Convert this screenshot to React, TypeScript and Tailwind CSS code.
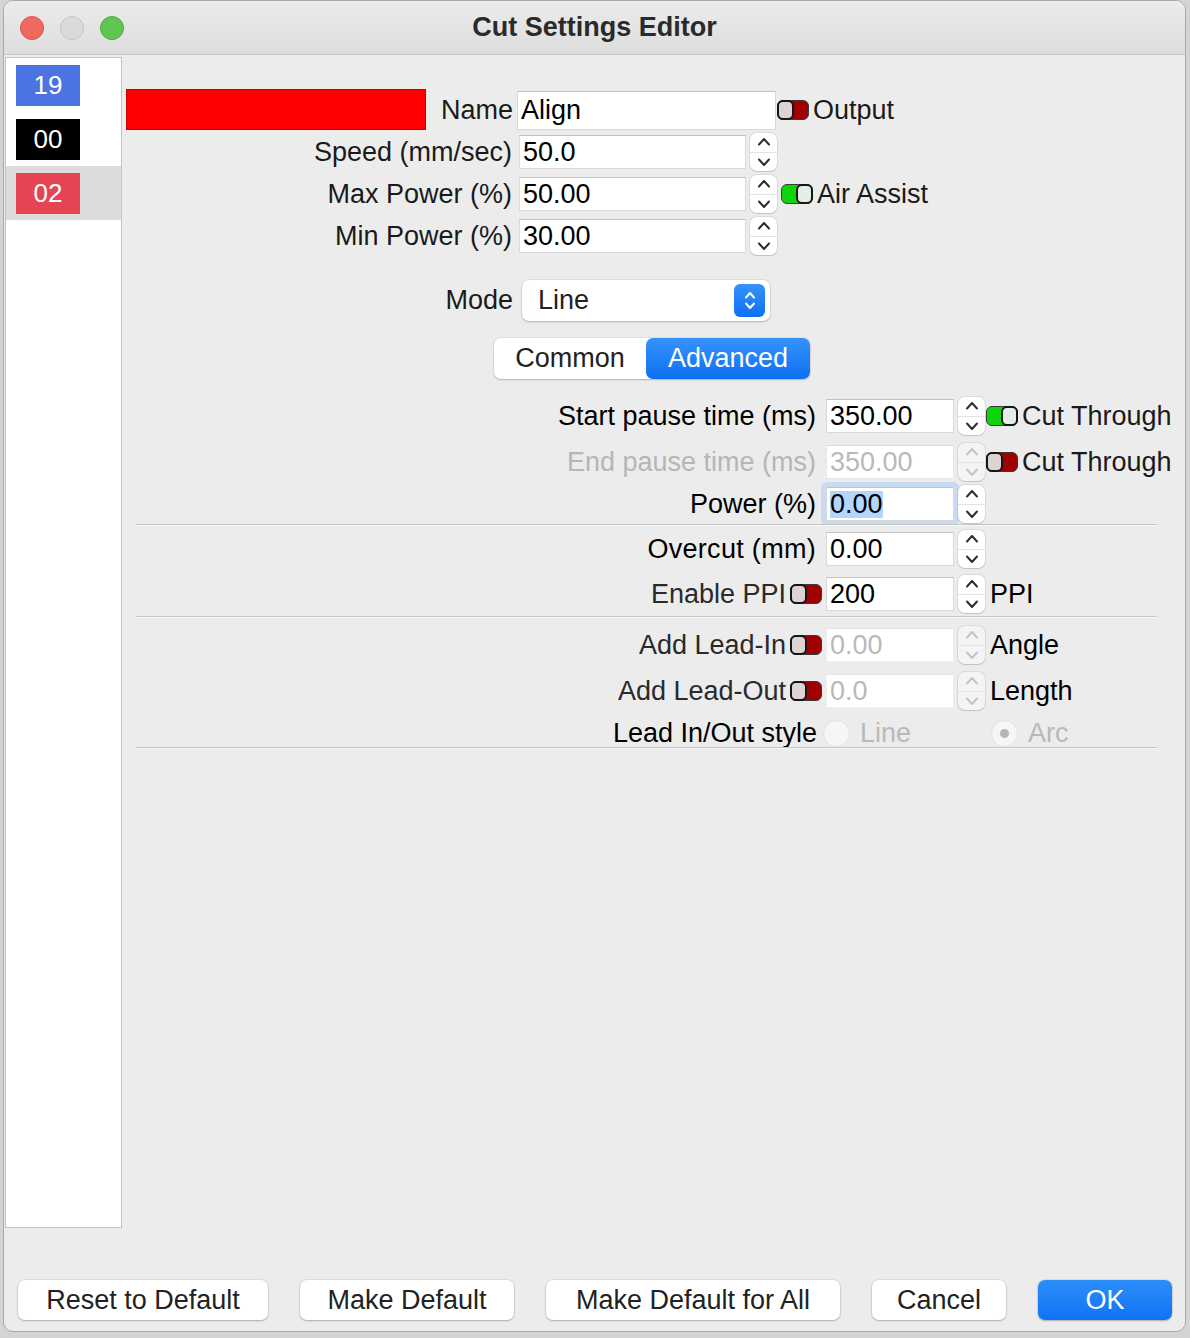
import React from 'react';

const Chevron = ({ up, color }: { up?: boolean; color: string }) => (
    <svg width="14" height="9" viewBox="0 0 14 9" fill="none">
        <path
            d={up ? 'M2 7.5 L7 2 L12 7.5' : 'M2 1.5 L7 7 L12 1.5'}
            stroke={color}
            strokeWidth="2"
            strokeLinecap="round"
            strokeLinejoin="round"
        />
    </svg>
);

const Spinner = ({ disabled }: { disabled?: boolean }) => (
    <div
        className={`flex h-[38px] w-[27px] shrink-0 flex-col items-center justify-between rounded-[7px] py-[4px] shadow-[0_0_0_1px_rgba(0,0,0,0.07),0_1px_1px_rgba(0,0,0,0.12)] ${
            disabled ? 'bg-[#f4f4f4]' : 'bg-white'
        }`}
    >
        <Chevron up color={disabled ? '#c4c4c4' : '#2e2e2e'} />
        <div className="h-px w-full bg-[#e4e4e4]" />
        <Chevron color={disabled ? '#c4c4c4' : '#2e2e2e'} />
    </div>
);

const Toggle = ({ on }: { on?: boolean }) => (
    <div
        className={`flex h-[20px] w-[32px] shrink-0 items-center rounded-[6px] border border-[#3a3a3a] ${
            on ? 'justify-end bg-[#0cd50c]' : 'justify-start bg-[#a00000]'
        }`}
    >
        <div
            className={`-my-px h-[20px] w-[17px] rounded-[6px] border-2 border-[#161616] ${
                on ? '-mr-px bg-[#e3eee4]' : '-ml-px bg-[#ddd3d3]'
            }`}
        />
    </div>
);

const Field = ({ children, className, disabled }: { children: React.ReactNode; className: string; disabled?: boolean }) => (
    <div
        className={`flex shrink-0 items-center border border-[#d9d9d9] border-t-[#c2c2c2] bg-white pl-[3px] ${
            disabled ? 'text-[#b9b9b9]' : 'text-black'
        } ${className}`}
    >
        {children}
    </div>
);

const Separator = ({ className = '' }: { className?: string }) => (
    <div className={`h-[2px] w-full border-t border-[#c6c6c6] border-b border-b-[#f6f6f6] ${className}`} />
);

const Layer = ({ label, color, active }: { label: string; color: string; active?: boolean }) => (
    <div className={`flex h-[54px] items-center pl-[10px] ${active ? 'bg-[#dcdcdc]' : ''}`}>
        <div className={`flex h-[41px] w-[64px] items-center justify-center text-[26px] text-white ${color}`}>{label}</div>
    </div>
);

const Button = ({ children, className, primary }: { children: React.ReactNode; className: string; primary?: boolean }) => (
    <div
        className={`flex h-[40px] items-center justify-center rounded-[7px] shadow-[0_0_0_1px_rgba(0,0,0,0.06),0_1px_2px_rgba(0,0,0,0.22)] ${
            primary ? 'bg-gradient-to-b from-[#2d8efa] to-[#0b73f4] text-white' : 'bg-white text-[#222]'
        } ${className}`}
    >
        {children}
    </div>
);

export default function App() {
    return (
        <div className="h-[1338px] w-[1190px] overflow-hidden bg-[#d4d4d4] font-['Liberation_Sans',Arial,sans-serif] text-[27px] leading-none whitespace-nowrap text-[#1a1a1a]">
            <div className="ml-[3px] flex h-[1332px] w-[1183px] flex-col overflow-hidden rounded-[10px] border border-[#a9a9a9] bg-[#ececec]">
                {/* Title bar */}
                <div className="flex h-[54px] shrink-0 items-center border-b border-[#c8c8c8] bg-gradient-to-b from-[#ececec] to-[#dddddd]">
                    <div className="flex w-[150px] gap-[16px] pl-[16px]">
                        <div className="h-[24px] w-[24px] rounded-full border border-[#d5564a] bg-[#ee6a5f]" />
                        <div className="h-[24px] w-[24px] rounded-full border border-[#c4c4c4] bg-[#dadada]" />
                        <div className="h-[24px] w-[24px] rounded-full border border-[#4ea73f] bg-[#61c554]" />
                    </div>
                    <div className="flex-1 text-center text-[27px] font-bold text-[#2a2a2a]">Cut Settings Editor</div>
                    <div className="w-[150px]" />
                </div>

                {/* Body */}
                <div className="flex h-[1173px] shrink-0">
                    <div className="ml-px mt-[2px] h-[1171px] w-[117px] shrink-0 border border-[#c4c4c4] bg-white">
                        <Layer label="19" color="bg-[#4b73e2]" />
                        <Layer label="00" color="bg-black" />
                        <Layer label="02" color="bg-[#e54553]" active />
                    </div>

                    <div className="flex flex-1 flex-col pt-[34px]">
                        {/* Name row */}
                        <div className="flex h-[42px] items-center">
                            <div className="ml-[4px] -mt-[2px] h-[41px] w-[300px] shrink-0 border border-[#c70000] bg-[#fe0000]" />
                            <div className="w-[87px] shrink-0 text-right">Name</div>
                            <Field className="ml-[4px] h-[39px] w-[259px]">Align</Field>
                            <div className="ml-px">
                                <Toggle />
                            </div>
                            <div className="ml-[4px]">Output</div>
                        </div>

                        {/* Speed / power rows */}
                        {[
                            ['Speed (mm/sec)', '50.0', false],
                            ['Max Power (%)', '50.00', true],
                            ['Min Power (%)', '30.00', false],
                        ].map(([label, value, air], i) => (
                            <div key={i} className="flex h-[42px] items-center">
                                <div className="ml-[4px] w-[386px] shrink-0 text-right">{label}</div>
                                <Field className="ml-[7px] h-[34px] w-[227px]">{value}</Field>
                                <div className="ml-[4px]">
                                    <Spinner />
                                </div>
                                {air && (
                                    <>
                                        <div className="ml-[4px]">
                                            <Toggle on />
                                        </div>
                                        <div className="ml-[4px]">Air Assist</div>
                                    </>
                                )}
                            </div>
                        ))}

                        {/* Mode */}
                        <div className="mt-[22px] flex h-[42px] items-center">
                            <div className="ml-[4px] w-[387px] shrink-0 text-right">Mode</div>
                            <div className="ml-[9px] flex h-[41px] w-[248px] shrink-0 items-center justify-between rounded-[7px] bg-white pl-[16px] pr-[5px] text-[#222] shadow-[0_0_0_1px_rgba(0,0,0,0.06),0_1px_2px_rgba(0,0,0,0.2)]">
                                <span>Line</span>
                                <div className="flex h-[33px] w-[31px] flex-col items-center justify-center gap-[3px] rounded-[6px] bg-gradient-to-b from-[#3592fb] to-[#0a70f3]">
                                    <svg width="12" height="8" viewBox="0 0 12 8" fill="none">
                                        <path d="M2 6.5 L6 2 L10 6.5" stroke="white" strokeWidth="2" strokeLinecap="round" strokeLinejoin="round" />
                                    </svg>
                                    <svg width="12" height="8" viewBox="0 0 12 8" fill="none">
                                        <path d="M2 1.5 L6 6 L10 1.5" stroke="white" strokeWidth="2" strokeLinecap="round" strokeLinejoin="round" />
                                    </svg>
                                </div>
                            </div>
                        </div>

                        {/* Segmented control */}
                        <div className="ml-[372px] mt-[17px] flex h-[41px] w-[316px] rounded-[7px] bg-white shadow-[0_0_0_1px_rgba(0,0,0,0.05),0_1px_2px_rgba(0,0,0,0.2)]">
                            <div className="flex w-[152px] items-center justify-center text-[#222]">Common</div>
                            <div className="flex flex-1 items-center justify-center rounded-[7px] bg-gradient-to-b from-[#3592fb] to-[#0a70f3] text-white">
                                Advanced
                            </div>
                        </div>

                        {/* Advanced block */}
                        <div className="ml-[14px] mt-[14px] flex w-[1021px] flex-col">
                            <div className="flex h-[46px] items-center">
                                <div className="flex w-[686px] shrink-0 justify-end pr-[6px] text-black">Start pause time (ms)</div>
                                <Field className="ml-[4px] h-[34px] w-[128px]">350.00</Field>
                                <div className="ml-[4px]">
                                    <Spinner />
                                </div>
                                <div className="ml-px">
                                    <Toggle on />
                                </div>
                                <div className="ml-[4px]">Cut Through</div>
                            </div>
                            <div className="flex h-[46px] items-center">
                                <div className="flex w-[686px] shrink-0 justify-end pr-[6px] text-[#b6b6b6]">End pause time (ms)</div>
                                <Field disabled className="ml-[4px] h-[34px] w-[128px] border-[#e6e6e6] border-t-[#dadada] bg-[#f9f9f9]">
                                    350.00
                                </Field>
                                <div className="ml-[4px]">
                                    <Spinner disabled />
                                </div>
                                <div className="ml-px">
                                    <Toggle />
                                </div>
                                <div className="ml-[4px]">Cut Through</div>
                            </div>
                            <div className="flex h-[38px] items-center">
                                <div className="flex w-[686px] shrink-0 justify-end pr-[6px] text-black">Power (%)</div>
                                <Field className="ml-[4px] h-[34px] w-[128px] rounded-[2px] shadow-[0_0_0_5px_#c9dbf0]">
                                    <span className="bg-[#b4d5fe]">0.00</span>
                                </Field>
                                <div className="ml-[4px]">
                                    <Spinner />
                                </div>
                            </div>
                            <Separator className="mt-[1px]" />
                            <div className="flex h-[46px] items-center">
                                <div className="flex w-[686px] shrink-0 justify-end pr-[6px] tracking-[0.3px] text-black">Overcut (mm)</div>
                                <Field className="ml-[4px] h-[34px] w-[128px]">0.00</Field>
                                <div className="ml-[4px]">
                                    <Spinner />
                                </div>
                            </div>
                            <div className="flex h-[44px] items-center">
                                <div className="flex w-[686px] shrink-0 items-center justify-end gap-[4px] text-[#2a2a2a]">
                                    <span>Enable PPI</span>
                                    <Toggle />
                                </div>
                                <Field className="ml-[4px] h-[34px] w-[128px]">200</Field>
                                <div className="ml-[4px]">
                                    <Spinner />
                                </div>
                                <div className="ml-[5px] text-black">PPI</div>
                            </div>
                            <Separator />
                            <div className="mt-[4px] flex h-[46px] items-center">
                                <div className="flex w-[686px] shrink-0 items-center justify-end gap-[4px] text-[#2a2a2a]">
                                    <span>Add Lead-In</span>
                                    <Toggle />
                                </div>
                                <Field disabled className="ml-[4px] h-[34px] w-[128px] border-[#efefef] border-t-[#e4e4e4]">
                                    0.00
                                </Field>
                                <div className="ml-[4px]">
                                    <Spinner disabled />
                                </div>
                                <div className="ml-[5px] text-black">Angle</div>
                            </div>
                            <div className="flex h-[46px] items-center">
                                <div className="flex w-[686px] shrink-0 items-center justify-end gap-[4px] text-[#2a2a2a]">
                                    <span>Add Lead-Out</span>
                                    <Toggle />
                                </div>
                                <Field disabled className="ml-[4px] h-[34px] w-[128px] border-[#efefef] border-t-[#e4e4e4]">
                                    0.0
                                </Field>
                                <div className="ml-[4px]">
                                    <Spinner disabled />
                                </div>
                                <div className="ml-[5px] text-black">Length</div>
                            </div>
                            <div className="mt-[5px] flex h-[28px] items-center">
                                <div className="flex w-[681px] shrink-0 justify-end text-black">Lead In/Out style</div>
                                <div className="ml-[6px] h-[27px] w-[27px] shrink-0 rounded-full border border-[#e2e2e2] bg-[#f6f6f6]" />
                                <div className="ml-[10px] text-[#b9b9b9]">Line</div>
                                <div className="ml-[80px] flex h-[27px] w-[27px] shrink-0 items-center justify-center rounded-full border border-[#e2e2e2] bg-[#f6f6f6]">
                                    <div className="h-[9px] w-[9px] rounded-full bg-[#b4b4b4]" />
                                </div>
                                <div className="ml-[10px] text-[#b9b9b9]">Arc</div>
                            </div>
                            <Separator />
                        </div>
                    </div>
                </div>

                {/* Footer buttons */}
                <div className="flex gap-[32px] pl-[14px] pt-[52px]">
                    <Button className="w-[250px]">Reset to Default</Button>
                    <Button className="w-[214px]">Make Default</Button>
                    <Button className="w-[294px]">Make Default for All</Button>
                    <Button className="w-[134px]">Cancel</Button>
                    <Button primary className="w-[134px]">
                        OK
                    </Button>
                </div>
            </div>
        </div>
    );
}
